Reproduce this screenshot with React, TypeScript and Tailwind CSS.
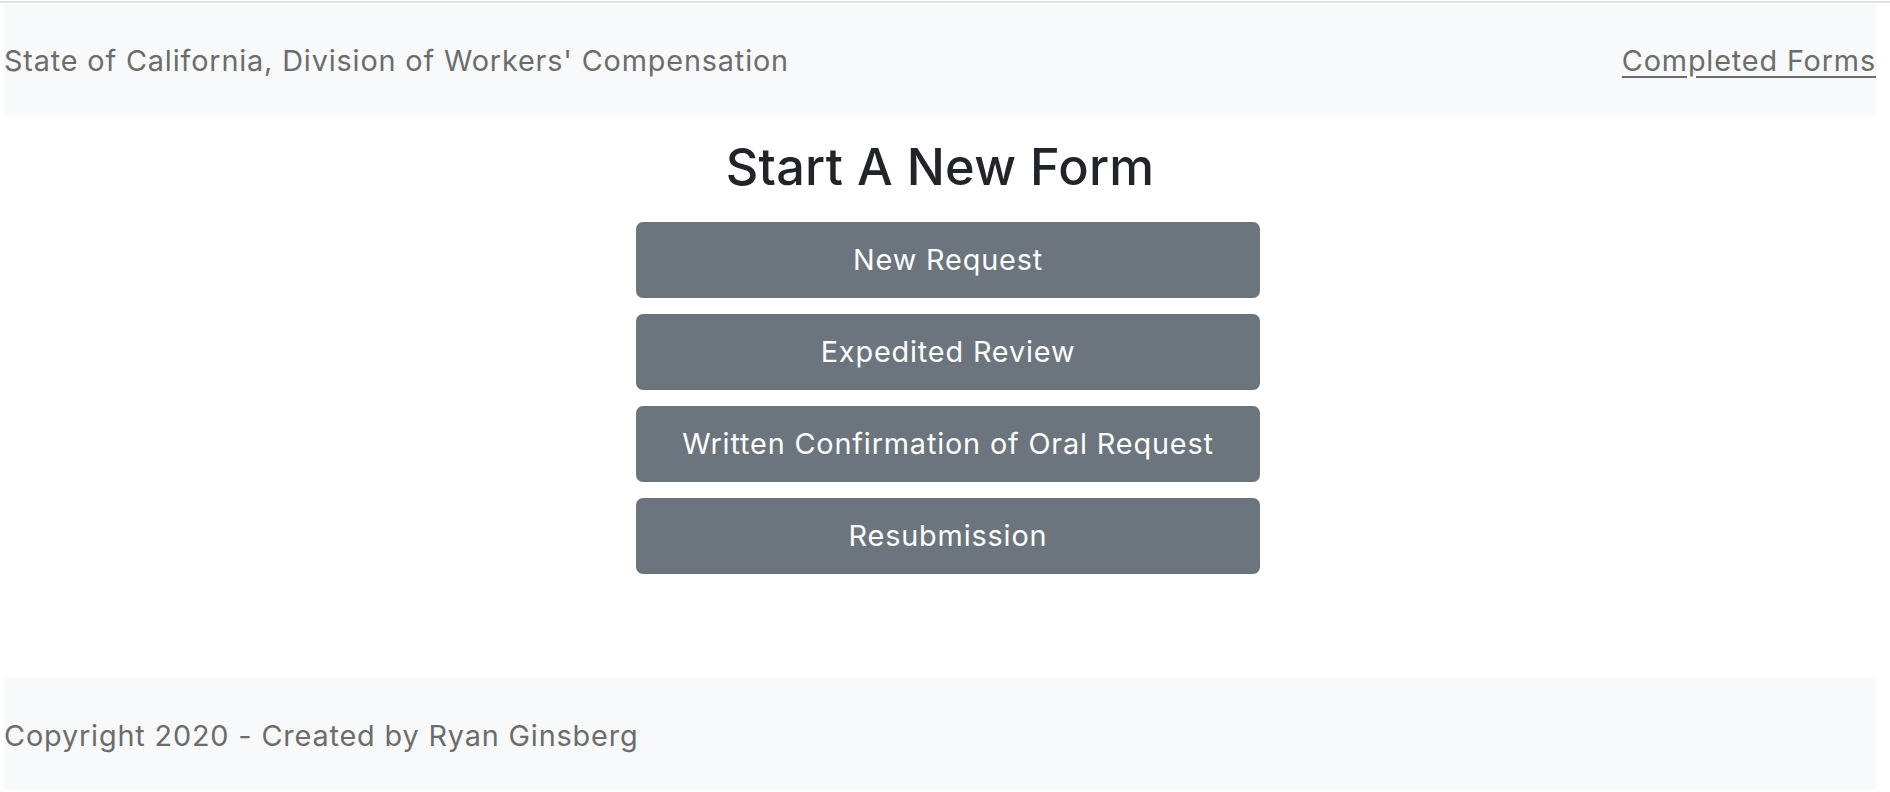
import React from "react";

const forms = [
    "New Request",
    "Expedited Review",
    "Written Confirmation of Oral Request",
    "Resubmission",
];

export default function App() {
    return (
        <div className="min-h-[792px] bg-white font-['Inter',sans-serif] text-[28.8px] tracking-[0.85px]">
            <div className="pt-px">
                <div className="h-[2px] bg-[#dee2e6]" />
            </div>

            <div className="ml-[4px] mr-[14px] mt-px">
                <header className="h-[111px] pt-[2px] bg-[#f8f9fa] flex items-center justify-between text-[#6c6c6c]">
                    <span>State of California, Division of Workers' Compensation</span>
                    <a href="#" className="underline underline-offset-[5px]">Completed Forms</a>
                </header>

                <main className="h-[563px] flex flex-col items-center">
                    <h1 className="mt-[22px] text-[50.4px] leading-[60px] font-medium tracking-[0.3px] text-[#212529]">Start A New Form</h1>
                    <div className="mt-[25px] w-[640px] pl-[16px] flex flex-col gap-[16px]">
                        {forms.map((label) => (
                            <button
                                key={label}
                                className="h-[76px] w-full rounded-[7px] bg-[#6c757d] text-white flex items-center justify-center"
                            >
                                {label}
                            </button>
                        ))}
                    </div>
                </main>

                <footer className="h-[112px] pt-[3px] bg-[#f8f9fa] flex items-center text-[#6c6c6c]">
                    <span>Copyright 2020 - Created by Ryan Ginsberg</span>
                </footer>
            </div>
        </div>
    );
}
